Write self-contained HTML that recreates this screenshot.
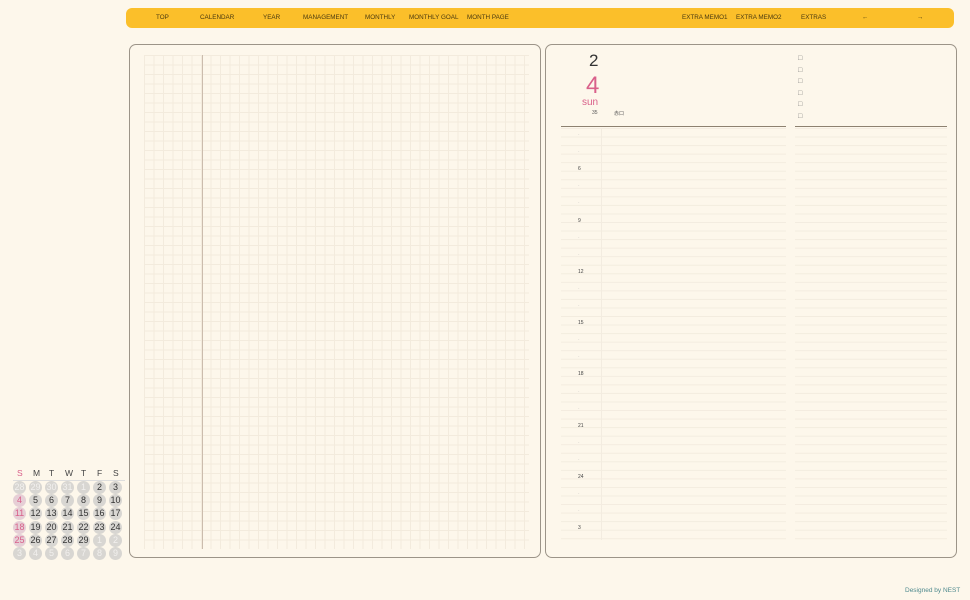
<!DOCTYPE html>
<html><head><meta charset="utf-8"><style>
*{margin:0;padding:0;box-sizing:border-box}
body{width:970px;height:600px;background:#fdf7eb;font-family:"Liberation Sans",sans-serif;position:relative;overflow:hidden;color:#444}
.nav{position:absolute;left:126px;top:8px;width:828px;height:20px;background:#fbbf2a;border-radius:6px}
.nav span{position:absolute;top:6px;font-size:6.3px;color:#4a3a10;white-space:nowrap}
.panel{position:absolute;top:44px;height:514px;border:1.3px solid #9c9488;border-radius:7px;background:#fdf7eb}
.grid{position:absolute;left:14px;top:10px;width:385px;height:494px;
background-image:linear-gradient(#f3ebdd 1px,transparent 1px),linear-gradient(90deg,#f3ebdd 1px,transparent 1px);background-size:9.5px 9.5px}
.vl{position:absolute;left:72px;top:10px;width:1px;height:494px;background:#cbbcad}
.t{position:absolute;font-size:5px;color:#555}
.rows{position:absolute;top:83px;height:412px;background-image:linear-gradient(#f3ecdf 1px,transparent 1px);background-size:100% 8.55px}
.cal{position:absolute;left:13px;top:468px;font-size:9px}
.cal div{position:absolute;width:13px;height:13px;border-radius:50%;background:#d8d6d2;text-align:center;line-height:13px;color:#333}
</style></head><body>
<div class="nav">
<span style="left:30px">TOP</span><span style="left:74px">CALENDAR</span><span style="left:137px">YEAR</span><span style="left:177px">MANAGEMENT</span><span style="left:239px">MONTHLY</span><span style="left:283px">MONTHLY GOAL</span><span style="left:341px">MONTH PAGE</span>
<span style="left:556px">EXTRA MEMO1</span><span style="left:610px">EXTRA MEMO2</span><span style="left:675px">EXTRAS</span><span style="left:736px">←</span><span style="left:791px">→</span>
</div>
<div class="panel" style="left:129px;width:412px"><div class="grid"></div><div class="vl"></div></div>
<div class="panel" style="left:545px;width:412px">
<div style="position:absolute;left:43px;top:6px;font-size:17px;color:#333">2</div>
<div style="position:absolute;left:40px;top:27px;font-size:24px;color:#d9608a">4</div>
<div style="position:absolute;left:36px;top:52px;font-size:10px;color:#d9608a">sun</div>
<div class="t" style="left:46px;top:65px">35</div><div class="t" style="left:68px;top:65px">赤口</div>
<div style="position:absolute;left:15px;top:81px;width:225px;height:1px;background:#8d8170"></div>
<div style="position:absolute;left:249px;top:81px;width:152px;height:1px;background:#8d8170"></div>
<div class="rows" style="left:15px;width:225px"></div>
<div class="rows" style="left:249px;width:152px"></div>
<div style="position:absolute;left:55px;top:83px;width:1px;height:412px;background:#f3ece0"></div>
<div style="position:absolute;left:252px;top:8px;font-size:7px;line-height:11.5px;color:#777">□<br>□<br>□<br>□<br>□<br>□</div>
</div>
<div id="times"></div>
<div style="position:absolute;left:905px;top:587px;font-size:6.5px;color:#4f8a8e">Designed by NEST</div>
<div class="cal" id="cal"></div>
<script>
var lb=['·','·','6','·','·','9','·','·','12','·','·','15','·','·','18','·','·','21','·','·','24','·','·','3'],h='';
for(var i=0;i<lb.length;i++){h+='<div class="t" style="left:'+(578)+'px;top:'+(132+i*17.1)+'px;color:'+(lb[i]=='·'?'#bbb':'#444')+'">'+lb[i]+'</div>';}
document.getElementById('times').innerHTML=h;
var d=['S','M','T','W','T','F','S'],c='';
for(var j=0;j<7;j++)c+='<span style="position:absolute;left:'+(j*16+4)+'px;top:0;font-size:8.5px;color:'+(j==0?'#d9608a':'#444')+'">'+d[j]+'</span>';
c+='<span style="position:absolute;left:0;top:12px;width:112px;height:1px;background:#ddd"></span>';
var n=[28,29,30,31,1,2,3];
for(var r=0;r<6;r++)for(var j=0;j<7;j++){var v,dim=false,k=r*7+j;
if(r==0){v=n[j];dim=j<5;}else{v=k-3;if(v>29){v-=29;dim=true;}}
var col=dim?'#f2f0ee':(j==0?'#d9608a':'#333');
var bg=(j==0&&!dim)?'#e6cfd6':'#d8d6d2';
c+='<div style="left:'+(j*16)+'px;top:'+(13+r*13.2)+'px;color:'+col+';background:'+bg+'">'+v+'</div>';}
document.getElementById('cal').innerHTML=c;
</script>
</body></html>
